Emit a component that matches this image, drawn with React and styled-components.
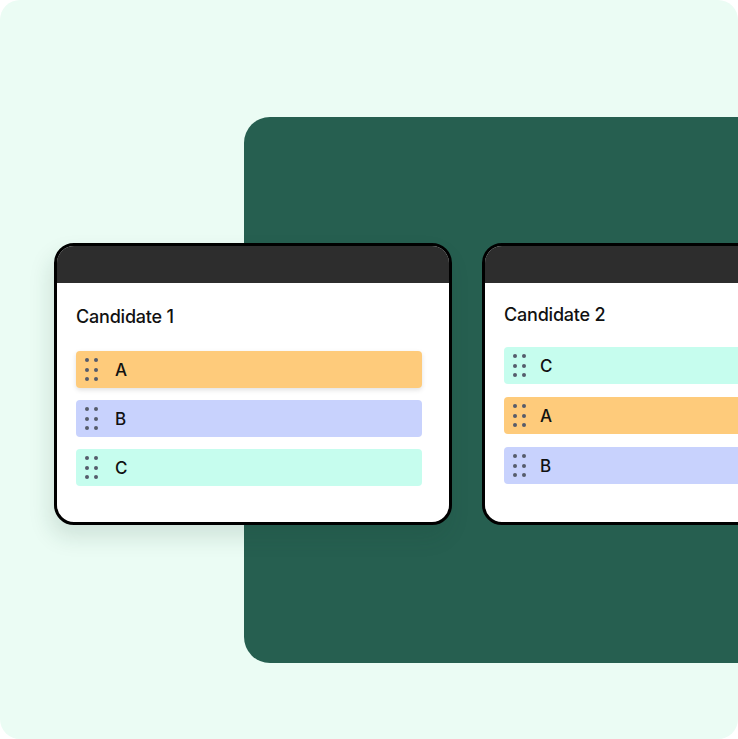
import React from "react";
import styled, { createGlobalStyle } from "styled-components";

const Global = createGlobalStyle`
  html, body { margin: 0; padding: 0; background: #ffffff; }
  body { font-family: Inter, "Noto Sans", "Liberation Sans", sans-serif; }
  * { box-sizing: border-box; }
`;

const Frame = styled.div`
  position: relative;
  width: 738px;
  height: 739px;
  background: #ebfcf4;
  border-radius: 20px;
  overflow: hidden;
`;

const Panel = styled.div`
  position: absolute;
  left: 244px;
  top: 117px;
  right: -40px;
  height: 546px;
  background: #265f50;
  border-radius: 26px;
`;

const CardRow = styled.div`
  position: relative;
  display: flex;
  gap: 30px;
  padding: 243px 0 0 54px;
  width: 1000px;
`;

const Card = styled.div`
  flex: none;
  width: 398px;
  height: 282px;
  background: #ffffff;
  border: 3px solid #000000;
  border-radius: 20px;
  overflow: hidden;
  display: flex;
  flex-direction: column;
  box-shadow: ${(p) => (p.$shadow ? "-4px 12px 22px rgba(20, 60, 45, 0.13)" : "none")};
`;

const TitleBar = styled.div`
  height: 37px;
  flex: none;
  background: #2d2d2d;
`;

const Body = styled.div`
  padding: ${(p) => (p.$compact ? "21px 19px 0 19px" : "23px 27px 0 19px")};
  display: flex;
  flex-direction: column;
`;

const Title = styled.div`
  font-size: 18px;
  font-weight: 500;
  color: #111111;
  line-height: 22px;
  letter-spacing: -0.2px;
  margin-bottom: ${(p) => (p.$compact ? "21px" : "23px")};
`;

const List = styled.div`
  display: flex;
  flex-direction: column;
  gap: ${(p) => (p.$compact ? "13px" : "12px")};
`;

const Item = styled.div`
  height: 37px;
  border-radius: 4px;
  background: ${(p) => p.$bg};
  display: flex;
  align-items: center;
  padding-left: 9px;
  gap: ${(p) => (p.$compact ? "14px" : "17px")};
  box-shadow: ${(p) => (p.$lifted ? "0 2px 5px rgba(0,0,0,0.12)" : "none")};
`;

const Handle = styled.div`
  display: grid;
  grid-template-columns: repeat(2, 4px);
  grid-auto-rows: 4px;
  column-gap: 5px;
  row-gap: 5.5px;
`;

const Dot = styled.span`
  width: 4px;
  height: 4px;
  border-radius: 50%;
  background: #555c6b;
`;

const Letter = styled.span`
  font-size: 17px;
  font-weight: 500;
  color: #111111;
`;

const COLORS = { A: "#fecb7b", B: "#c8d2fd", C: "#c6fdee" };

function DragHandle() {
  return (
    <Handle>
      {Array.from({ length: 6 }).map((_, i) => (
        <Dot key={i} />
      ))}
    </Handle>
  );
}

function Candidate({ name, order, shadow, compact, lifted }) {
  return (
    <Card $shadow={shadow}>
      <TitleBar />
      <Body $compact={compact}>
        <Title $compact={compact}>{name}</Title>
        <List $compact={compact}>
          {order.map((k) => (
            <Item key={k} $bg={COLORS[k]} $compact={compact} $lifted={lifted === k}>
              <DragHandle />
              <Letter>{k}</Letter>
            </Item>
          ))}
        </List>
      </Body>
    </Card>
  );
}

export default function App() {
  return (
    <>
      <Global />
      <Frame>
        <Panel />
        <CardRow>
          <Candidate name="Candidate 1" order={["A", "B", "C"]} shadow lifted="A" />
          <Candidate name="Candidate 2" order={["C", "A", "B"]} compact />
        </CardRow>
      </Frame>
    </>
  );
}
